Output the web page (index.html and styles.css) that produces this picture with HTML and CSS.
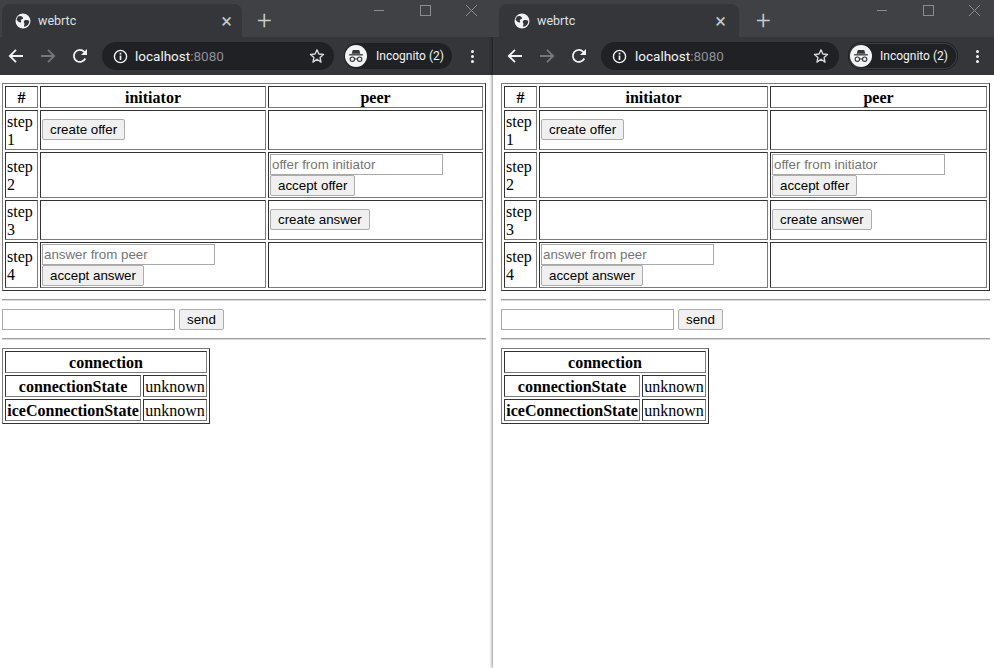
FILE: index.html
```html
<!DOCTYPE html>
<html lang="en">
	<head>
		<meta charset="UTF-8" />
		<title>webrtc</title>
		<link rel="stylesheet" href="styles.css">
	</head>
	<body>
		<svg class="defs" width="0" height="0">
			<symbol id="i-globe" viewBox="0 0 16 16">
				<circle cx="8" cy="8" r="7.5" fill="#f1f3f4"/>
				<path d="M3 3.500c2-1 3.500-.5 4.500.5 1 1 .5 2-.5 2.300-1 .3-1.500 1-1 2 .4.800-.2 1.500-1 1.200C3.500 9 2 7.500 1.500 6.500zM9.500 7.500c1-.5 3-.7 4.700.2.300 1.500-.5 3.500-2 4.800-1 .8-2.200 1.200-3 1.200-.6-1 .3-1.700.3-2.700 0-1-.8-1.500-.7-2.300 0-.5.200-1 .7-1.200z" fill="#35363a"/>
			</symbol>
			<symbol id="i-star" viewBox="0 0 16 16">
				<path d="M8 1.800l1.900 4.200 4.600.5-3.400 3.100.9 4.500L8 11.300l-4 2.800.9-4.500L1.500 6.500l4.600-.5z" fill="none" stroke="#d8d9db" stroke-width="1.400" stroke-linejoin="round"/>
			</symbol>
			<symbol id="i-spy" viewBox="0 0 24 24">
				<circle cx="12" cy="12" r="12" fill="#f1f3f4"/>
				<path d="M8.500 5.500h7l1.200 4H7.300z" fill="#35363a"/>
				<rect x="4.500" y="10" width="15" height="1.400" fill="#35363a"/>
				<circle cx="8" cy="15.500" r="2.400" fill="none" stroke="#35363a" stroke-width="1.200"/>
				<circle cx="16" cy="15.500" r="2.400" fill="none" stroke="#35363a" stroke-width="1.200"/>
				<path d="M10.400 15.200h3.200" stroke="#35363a" stroke-width="1.200"/>
			</symbol>
			<symbol id="i-back" viewBox="0 0 16 16">
				<path d="M15 8H2M8 1.800L1.800 8 8 14.200" fill="none" stroke="currentColor" stroke-width="1.800"/>
			</symbol>
			<symbol id="i-forward" viewBox="0 0 16 16">
				<path d="M1 8h13M8 1.800L14.200 8 8 14.200" fill="none" stroke="currentColor" stroke-width="1.800"/>
			</symbol>
			<symbol id="i-reload" viewBox="0 0 16 16">
				<path d="M13.300 10.500A6 6 0 1 1 12.300 3.800L14 5.500" fill="none" stroke="currentColor" stroke-width="1.800"/>
				<path d="M15 1v6H9z" fill="currentColor"/>
			</symbol>
			<symbol id="i-info" viewBox="0 0 16 16">
				<circle cx="8" cy="8" r="6.500" fill="none" stroke="currentColor" stroke-width="1.500"/>
				<path d="M7.100 7h1.800v4.800H7.100zM7.100 4h1.800v1.800H7.100z" fill="currentColor"/>
			</symbol>
		</svg>

		<main class="desktop">
			<section class="window window-left">
				<header class="titlebar">
					<div class="tab">
						<svg class="favicon"><use href="#i-globe"/></svg>
						<span class="tab-title">webrtc</span>
						<span class="tab-close">×</span>
					</div>
					<span class="new-tab">+</span>
					<div class="controls">
						<span class="ctl-min"></span>
						<span class="ctl-max"></span>
						<span class="ctl-close">
							<svg width="13" height="13" viewBox="0 0 13 13"><path d="M1 1l11 11M12 1L1 12" stroke="#8a8c8f" stroke-width="1"/></svg>
						</span>
					</div>
				</header>
				<nav class="toolbar">
					<svg class="nav-icon"><use href="#i-back"/></svg>
					<svg class="nav-icon nav-off"><use href="#i-forward"/></svg>
					<svg class="nav-icon"><use href="#i-reload"/></svg>
					<div class="omnibox">
						<svg class="info"><use href="#i-info"/></svg>
						<span class="host">localhost</span><span class="port">:8080</span>
						<svg class="star"><use href="#i-star"/></svg>
					</div>
					<div class="incognito">
						<svg class="spy"><use href="#i-spy"/></svg>
						<span>Incognito (2)</span>
					</div>
					<div class="kebab"><i></i><i></i><i></i></div>
				</nav>
				<div class="page">
					<table class="steps">
						<colgroup><col class="c-num"><col class="c-init"><col></colgroup>
						<thead>
							<tr class="r-head"><th>#</th><th>initiator</th><th>peer</th></tr>
						</thead>
						<tbody>
							<tr class="r-short">
								<td>step 1</td>
								<td><button>create offer</button></td>
								<td></td>
							</tr>
							<tr class="r-tall">
								<td>step 2</td>
								<td></td>
								<td><input placeholder="offer from initiator"><br><button>accept offer</button></td>
							</tr>
							<tr class="r-short">
								<td>step 3</td>
								<td></td>
								<td><button>create answer</button></td>
							</tr>
							<tr class="r-tall">
								<td>step 4</td>
								<td><input placeholder="answer from peer"><br><button>accept answer</button></td>
								<td></td>
							</tr>
						</tbody>
					</table>
					<hr>
					<div class="send-row"><input><button>send</button></div>
					<hr>
					<table class="conn">
						<tr><th colspan="2">connection</th></tr>
						<tr><th>connectionState</th><td>unknown</td></tr>
						<tr><th>iceConnectionState</th><td>unknown</td></tr>
					</table>
				</div>
			</section>

			<section class="window window-right">
				<header class="titlebar">
					<div class="tab">
						<svg class="favicon"><use href="#i-globe"/></svg>
						<span class="tab-title">webrtc</span>
						<span class="tab-close">×</span>
					</div>
					<span class="new-tab">+</span>
					<div class="controls">
						<span class="ctl-min"></span>
						<span class="ctl-max"></span>
						<span class="ctl-close">
							<svg width="13" height="13" viewBox="0 0 13 13"><path d="M1 1l11 11M12 1L1 12" stroke="#8a8c8f" stroke-width="1"/></svg>
						</span>
					</div>
				</header>
				<nav class="toolbar">
					<svg class="nav-icon"><use href="#i-back"/></svg>
					<svg class="nav-icon nav-off"><use href="#i-forward"/></svg>
					<svg class="nav-icon"><use href="#i-reload"/></svg>
					<div class="omnibox">
						<svg class="info"><use href="#i-info"/></svg>
						<span class="host">localhost</span><span class="port">:8080</span>
						<svg class="star"><use href="#i-star"/></svg>
					</div>
					<div class="incognito">
						<svg class="spy"><use href="#i-spy"/></svg>
						<span>Incognito (2)</span>
					</div>
					<div class="kebab"><i></i><i></i><i></i></div>
				</nav>
				<div class="page">
					<table class="steps">
						<colgroup><col class="c-num"><col class="c-init"><col></colgroup>
						<thead>
							<tr class="r-head"><th>#</th><th>initiator</th><th>peer</th></tr>
						</thead>
						<tbody>
							<tr class="r-short">
								<td>step 1</td>
								<td><button>create offer</button></td>
								<td></td>
							</tr>
							<tr class="r-tall">
								<td>step 2</td>
								<td></td>
								<td><input placeholder="offer from initiator"><br><button>accept offer</button></td>
							</tr>
							<tr class="r-short">
								<td>step 3</td>
								<td></td>
								<td><button>create answer</button></td>
							</tr>
							<tr class="r-tall">
								<td>step 4</td>
								<td><input placeholder="answer from peer"><br><button>accept answer</button></td>
								<td></td>
							</tr>
						</tbody>
					</table>
					<hr>
					<div class="send-row"><input><button>send</button></div>
					<hr>
					<table class="conn">
						<tr><th colspan="2">connection</th></tr>
						<tr><th>connectionState</th><td>unknown</td></tr>
						<tr><th>iceConnectionState</th><td>unknown</td></tr>
					</table>
				</div>
			</section>
		</main>
	</body>
</html>
```

FILE: styles.css
```css
html,
body {
	margin: 0;
	height: 100%;
	overflow: hidden;
	background: #fff;
}
body {
	font-family: 'Liberation Serif', serif;
	font-size: 16px;
	color: #000;
}
.defs {
	display: none;
}
.desktop {
	display: flex;
	width: 994px;
	height: 668px;
	overflow: hidden;
}
.window {
	height: 668px;
	flex: none;
	display: flex;
	flex-direction: column;
	background: #fff;
}
.window-left {
	width: 493px;
}
.window-right {
	width: 503px;
	box-shadow: -1px 0 3px rgba(0, 0, 0, 0.45);
}
.window-left .toolbar {
	padding-right: 1px;
}
.window-left .omnibox {
	padding-right: 9px;
}
.window-left .incognito {
	margin-right: 10px;
	gap: 9px;
}
.window-left .kebab {
	margin-right: 10px;
}
.window-right .titlebar,
.window-right .toolbar {
	padding-left: 6px;
}
.window-right .tab {
	padding: 0 13px 0 15px;
}
.window-right .new-tab {
	margin-left: 17px;
}
.window-right .info {
	margin-right: 8px;
}
.window-right .incognito {
	margin-right: 10px;
	box-shadow: inset 0 0 0 1px #3c3e42, 0 0 0 1px #202124;
}
.window-right .page {
	padding-left: 8px;
	padding-right: 6px;
}

/* browser chrome */
.titlebar {
	height: 37px;
	background: #3f4145;
	display: flex;
	align-items: flex-end;
	position: relative;
	padding-left: 2px;
}
.tab {
	width: 240px;
	height: 33px;
	background: #35363a;
	border-radius: 8px 8px 0 0;
	display: flex;
	align-items: center;
	box-sizing: border-box;
	padding: 0 10px 0 13px;
	color: #e8eaed;
	font: 12px 'Roboto', sans-serif;
}
.favicon {
	width: 16px;
	height: 16px;
}
.tab-title {
	margin-left: 7px;
	flex: 1;
	color: #dfe1e5;
	font-size: 12.500px;
}
.tab-close {
	color: #c4c7ca;
	font-size: 20px;
	line-height: 16px;
}
.new-tab {
	margin: 0 0 4px 15px;
	color: #c9cbce;
	font: 300 26px/26px 'Roboto', sans-serif;
}
.controls {
	position: absolute;
	top: 0;
	right: -1px;
	display: flex;
	height: 20px;
	align-items: center;
}
.controls span {
	display: flex;
	align-items: center;
	justify-content: center;
	width: 46px;
	height: 20px;
}
.ctl-min::before {
	content: '';
	width: 10px;
	height: 1px;
	background: #8a8c8f;
}
.ctl-max::before {
	content: '';
	width: 9px;
	height: 9px;
	border: 1px solid #8a8c8f;
}
.toolbar {
	height: 38px;
	background: #35363a;
	display: flex;
	align-items: center;
	color: #f1f3f4;
}
.nav-icon {
	width: 16px;
	height: 16px;
	margin-left: 16px;
	color: #f1f3f4;
}
.toolbar .nav-icon:first-child {
	margin-left: 8px;
}
.nav-off {
	color: #75777a;
}
.omnibox {
	flex: 1;
	height: 28px;
	margin-left: 14px;
	background: #202124;
	border-radius: 14px;
	display: flex;
	align-items: center;
	padding: 0 10px 0 11px;
	font: 13.500px 'Roboto', sans-serif;
}
.info {
	width: 15px;
	height: 15px;
	margin-right: 7px;
	color: #f1f3f4;
}
.host {
	color: #f1f3f4;
}
.port {
	color: #8e9196;
	flex: 1;
}
.star {
	width: 16px;
	height: 16px;
}
.incognito {
	margin: 0 11px 0 10px;
	width: 108px;
	height: 26px;
	border-radius: 13px;
	background: #202124;
	display: flex;
	align-items: center;
	box-sizing: border-box;
	padding-left: 1px;
	gap: 8px;
	color: #f1f3f4;
	font: 12px 'Roboto', sans-serif;
	white-space: nowrap;
}
.spy {
	width: 22px;
	height: 22px;
}
.kebab {
	width: 20px;
	margin-right: 9px;
	display: flex;
	flex-direction: column;
	align-items: center;
	gap: 2px;
}
.kebab i {
	width: 3px;
	height: 3px;
	border-radius: 50%;
	background: #f1f3f4;
}

/* page content */
.page {
	padding: 8px 7px 0 2px;
}
table {
	border-collapse: separate;
	border-spacing: 2px;
	border: 1px solid #7a7a7a;
	border-right-color: #333;
	border-bottom-color: #333;
}
th,
td {
	border: 1px solid #333;
	border-right-color: #7a7a7a;
	border-bottom-color: #7a7a7a;
	padding: 1px;
}
th,
.steps td:first-child,
.conn td {
	padding: 2px 1px 0;
}
.steps {
	width: 100%;
	table-layout: fixed;
	box-sizing: border-box;
}
.c-num {
	width: 33px;
}
.c-init {
	width: 226px;
}
.window-right .c-init {
	width: 229px;
}
.r-head {
	height: 22px;
}
.r-short {
	height: 40px;
}
.r-tall {
	height: 46px;
}
button {
	font: 13.333px 'Liberation Sans', sans-serif;
	height: 21px;
	padding: 1px 7px;
	margin: 0;
	background: #f0f0f0;
	border: 1px solid #adadad;
	border-radius: 2px;
	color: #000;
	vertical-align: top;
}
td > button:only-child {
	margin-bottom: 1px;
}
input {
	font: 13.333px 'Liberation Sans', sans-serif;
	width: 173px;
	height: 21px;
	box-sizing: border-box;
	padding: 1px;
	margin: 0;
	border: 1px solid #a9a9a9;
	vertical-align: top;
}
input::placeholder {
	color: #757575;
}
hr {
	margin: 8px 0;
	border: 0;
	border-top: 1px solid #a0a0a0;
	border-bottom: 1px solid #d8d8d8;
}
.send-row {
	display: flex;
	align-items: center;
	gap: 4px;
	height: 21px;
}
.conn td {
	text-align: center;
}
.conn {
	width: 208px;
	height: 76px;
	box-sizing: border-box;
}
```
